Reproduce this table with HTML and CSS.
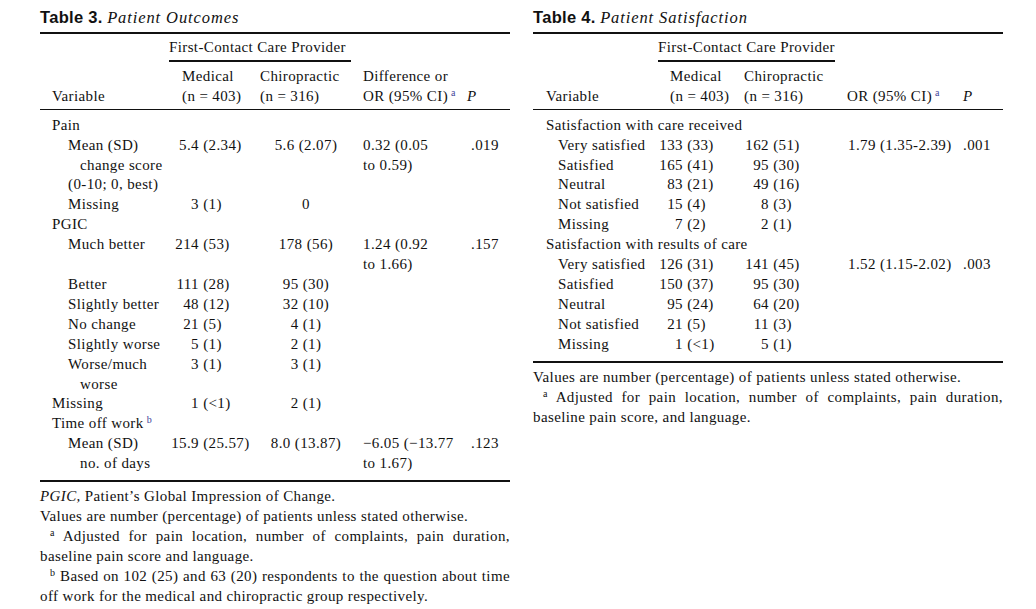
FILE: index.html
```html
<!DOCTYPE html>
<html lang="en">
<head>
<meta charset="utf-8">
<title>Patient Outcomes and Satisfaction</title>
<link rel="stylesheet" href="styles.css">
</head>
<body>
<main class="page">
  <section class="panel t3">
    <h2 class="title"><span class="tno">Table 3.</span> <i class="tname">Patient Outcomes</i></h2>
    <table class="tbl">
      <colgroup><col class="c1"><col class="c2"><col class="c3"><col class="c4"><col class="c5"></colgroup>
      <thead>
        <tr class="grp"><th></th><th colspan="2" class="prov">First-Contact Care Provider</th><th></th><th></th></tr>
        <tr class="hdr">
          <th class="hv">Variable</th>
          <th class="hm">Medical<br>(n = 403)</th>
          <th class="hc">Chiropractic<br>(n = 316)</th>
          <th class="hd">Difference or<br>OR (95% CI)<sup class="ref">a</sup></th>
          <th class="hp"><i>P</i></th>
        </tr>
      </thead>
      <tbody>
        <tr class="first"><td class="v l1" colspan="5">Pain</td></tr>
        <tr>
          <td class="v l2"><div>Mean (SD)</div><div class="hang">change score</div><div>(0-10; 0, best)</div></td>
          <td class="m"><span class="l">5.4</span> (2.34)</td>
          <td class="c">5.6 (2.07)</td>
          <td class="d"><div>0.32 (0.05</div><div>to 0.59)</div></td>
          <td class="p">.019</td>
        </tr>
        <tr><td class="v l2">Missing</td><td class="m"><span class="l">3</span> (1)</td><td class="c">0</td><td></td><td></td></tr>
        <tr><td class="v l1" colspan="5">PGIC</td></tr>
        <tr>
          <td class="v l2">Much better</td>
          <td class="m"><span class="l">214</span> (53)</td>
          <td class="c">178 (56)</td>
          <td class="d"><div>1.24 (0.92</div><div>to 1.66)</div></td>
          <td class="p">.157</td>
        </tr>
        <tr><td class="v l2">Better</td><td class="m"><span class="l">111</span> (28)</td><td class="c">95 (30)</td><td></td><td></td></tr>
        <tr><td class="v l2">Slightly better</td><td class="m"><span class="l">48</span> (12)</td><td class="c">32 (10)</td><td></td><td></td></tr>
        <tr><td class="v l2">No change</td><td class="m"><span class="l">21</span> (5)</td><td class="c">4 (1)</td><td></td><td></td></tr>
        <tr><td class="v l2">Slightly worse</td><td class="m"><span class="l">5</span> (1)</td><td class="c">2 (1)</td><td></td><td></td></tr>
        <tr><td class="v l2"><div>Worse/much</div><div class="hang">worse</div></td><td class="m"><span class="l">3</span> (1)</td><td class="c">3 (1)</td><td></td><td></td></tr>
        <tr><td class="v l1">Missing</td><td class="m"><span class="l">1</span> (&lt;1)</td><td class="c">2 (1)</td><td></td><td></td></tr>
        <tr><td class="v l1" colspan="5">Time off work<sup class="ref">b</sup></td></tr>
        <tr class="last">
          <td class="v l2"><div>Mean (SD)</div><div class="hang">no. of days</div></td>
          <td class="m"><span class="l">15.9</span> (25.57)</td>
          <td class="c">8.0 (13.87)</td>
          <td class="d"><div>−6.05 (−13.77</div><div>to 1.67)</div></td>
          <td class="p">.123</td>
        </tr>
      </tbody>
    </table>
    <div class="notes">
      <p><i>PGIC,</i> Patient’s Global Impression of Change.</p>
      <p>Values are number (percentage) of patients unless stated otherwise.</p>
      <p class="fn"><span class="mark">a</span> Adjusted for pain location, number of complaints, pain duration, baseline pain score and language.</p>
      <p class="fn"><span class="mark">b</span> Based on 102 (25) and 63 (20) respondents to the question about time off work for the medical and chiropractic group respectively.</p>
    </div>
  </section>

  <section class="panel t4">
    <h2 class="title"><span class="tno">Table 4.</span> <i class="tname">Patient Satisfaction</i></h2>
    <table class="tbl">
      <colgroup><col class="c1"><col class="c2"><col class="c3"><col class="c4"><col class="c5"></colgroup>
      <thead>
        <tr class="grp"><th></th><th colspan="2" class="prov">First-Contact Care Provider</th><th></th><th></th></tr>
        <tr class="hdr">
          <th class="hv">Variable</th>
          <th class="hm">Medical<br>(n = 403)</th>
          <th class="hc">Chiropractic<br>(n = 316)</th>
          <th class="hd">OR (95% CI)<sup class="ref">a</sup></th>
          <th class="hp"><i>P</i></th>
        </tr>
      </thead>
      <tbody>
        <tr class="first"><td class="v l1" colspan="5">Satisfaction with care received</td></tr>
        <tr><td class="v l2">Very satisfied</td><td class="m"><span class="l">133</span> (33)</td><td class="m2"><span class="l">162</span> (51)</td><td class="d">1.79 (1.35-2.39)</td><td class="p">.001</td></tr>
        <tr><td class="v l2">Satisfied</td><td class="m"><span class="l">165</span> (41)</td><td class="m2"><span class="l">95</span> (30)</td><td></td><td></td></tr>
        <tr><td class="v l2">Neutral</td><td class="m"><span class="l">83</span> (21)</td><td class="m2"><span class="l">49</span> (16)</td><td></td><td></td></tr>
        <tr><td class="v l2">Not satisfied</td><td class="m"><span class="l">15</span> (4)</td><td class="m2"><span class="l">8</span> (3)</td><td></td><td></td></tr>
        <tr><td class="v l2">Missing</td><td class="m"><span class="l">7</span> (2)</td><td class="m2"><span class="l">2</span> (1)</td><td></td><td></td></tr>
        <tr><td class="v l1" colspan="5">Satisfaction with results of care</td></tr>
        <tr><td class="v l2">Very satisfied</td><td class="m"><span class="l">126</span> (31)</td><td class="m2"><span class="l">141</span> (45)</td><td class="d">1.52 (1.15-2.02)</td><td class="p">.003</td></tr>
        <tr><td class="v l2">Satisfied</td><td class="m"><span class="l">150</span> (37)</td><td class="m2"><span class="l">95</span> (30)</td><td></td><td></td></tr>
        <tr><td class="v l2">Neutral</td><td class="m"><span class="l">95</span> (24)</td><td class="m2"><span class="l">64</span> (20)</td><td></td><td></td></tr>
        <tr><td class="v l2">Not satisfied</td><td class="m"><span class="l">21</span> (5)</td><td class="m2"><span class="l">11</span> (3)</td><td></td><td></td></tr>
        <tr class="last"><td class="v l2">Missing</td><td class="m"><span class="l">1</span> (&lt;1)</td><td class="m2"><span class="l">5</span> (1)</td><td></td><td></td></tr>
      </tbody>
    </table>
    <div class="notes">
      <p>Values are number (percentage) of patients unless stated otherwise.</p>
      <p class="fn"><span class="mark">a</span> Adjusted for pain location, number of complaints, pain duration, baseline pain score, and language.</p>
    </div>
  </section>
</main>
</body>
</html>
```

FILE: styles.css
```css
* { box-sizing: border-box; }

html, body {
  margin: 0;
  padding: 0;
  background: #ffffff;
}

body {
  font-family: "Liberation Serif", "Times New Roman", serif;
  font-size: 15px;
  line-height: 19.9px;
  letter-spacing: 0.38px;
  color: #111111;
}

.page {
  display: flex;
  gap: 23px;
  padding: 7px 0 0 40px;
}

.panel {
  width: 470px;
  flex: none;
}

.title {
  margin: 0 0 4px;
  font-size: 16.5px;
  line-height: 20px;
  font-weight: normal;
  white-space: nowrap;
}

.tno {
  font-family: "Liberation Sans", Arial, sans-serif;
  font-weight: bold;
  letter-spacing: 0.3px;
}

.tname {
  font-family: "Liberation Serif", "Times New Roman", serif;
  font-style: italic;
  letter-spacing: 0.9px;
}

.tbl {
  width: 470px;
  table-layout: fixed;
  border-collapse: collapse;
  border-top: 2px solid #111111;
  border-bottom: 2px solid #111111;
}

.tbl th,
.tbl td {
  padding: 0;
  font-weight: normal;
  text-align: left;
  vertical-align: top;
  white-space: nowrap;
}

.grp th { padding-top: 4px; padding-bottom: 2px; }
.grp .prov { border-bottom: 2px solid #111111; }

.hdr th {
  padding-top: 5px;
  padding-bottom: 2px;
  vertical-align: bottom;
  border-bottom: 1px solid #111111;
}

.first td { padding-top: 6px; }
.last td { padding-bottom: 6px; }

.ref {
  font-size: 10px;
  line-height: 0;
  vertical-align: 5px;
  margin-left: 3px;
  color: #45459a;
}

.hang { padding-left: 12px; }

.l {
  display: inline-block;
  text-align: right;
}

/* Table 3 columns */
.t3 .c1 { width: 129px; }
.t3 .c2 { width: 86px; }
.t3 .c3 { width: 96px; }
.t3 .c4 { width: 109px; }
.t3 .c5 { width: 50px; }

.t3 .hv { padding-left: 12px; }
.t3 .hm { padding-left: 13px; }
.t3 .hc { padding-left: 5px; }
.t3 .hd { padding-left: 12px; }
.t3 .hp { padding-left: 7px; }

.t3 .l1 { padding-left: 12px; }
.t3 .l2 { padding-left: 28px; }
.t3 .m .l { width: 30px; }
.t3 .c { text-align: center; padding-left: 6px; }
.t3 .d { padding-left: 12px; }
.t3 .p { padding-left: 11px; }

/* Table 4 columns */
.t4 .c1 { width: 125px; }
.t4 .c2 { width: 82px; }
.t4 .c3 { width: 95px; }
.t4 .c4 { width: 120px; }
.t4 .c5 { width: 48px; }

.t4 .hv { padding-left: 13px; }
.t4 .hm { padding-left: 12px; }
.t4 .hc { padding-left: 4px; }
.t4 .hd { padding-left: 12px; }
.t4 .hp { padding-left: 8px; }

.t4 .l1 { padding-left: 13px; }
.t4 .l2 { padding-left: 25px; }
.t4 .m .l { width: 25px; }
.t4 .m2 .l { width: 29px; }
.t4 .d { padding-left: 13px; }
.t4 .p { padding-left: 8px; }

/* Notes */
.notes {
  padding-top: 4px;
  line-height: 20px;
}

.notes p {
  margin: 0;
}

.notes .fn {
  text-align: justify;
  text-indent: 10px;
}

.notes .mark {
  display: inline-block;
  text-indent: 0;
  font-size: 10px;
  line-height: 10px;
  vertical-align: 5px;
}
```
